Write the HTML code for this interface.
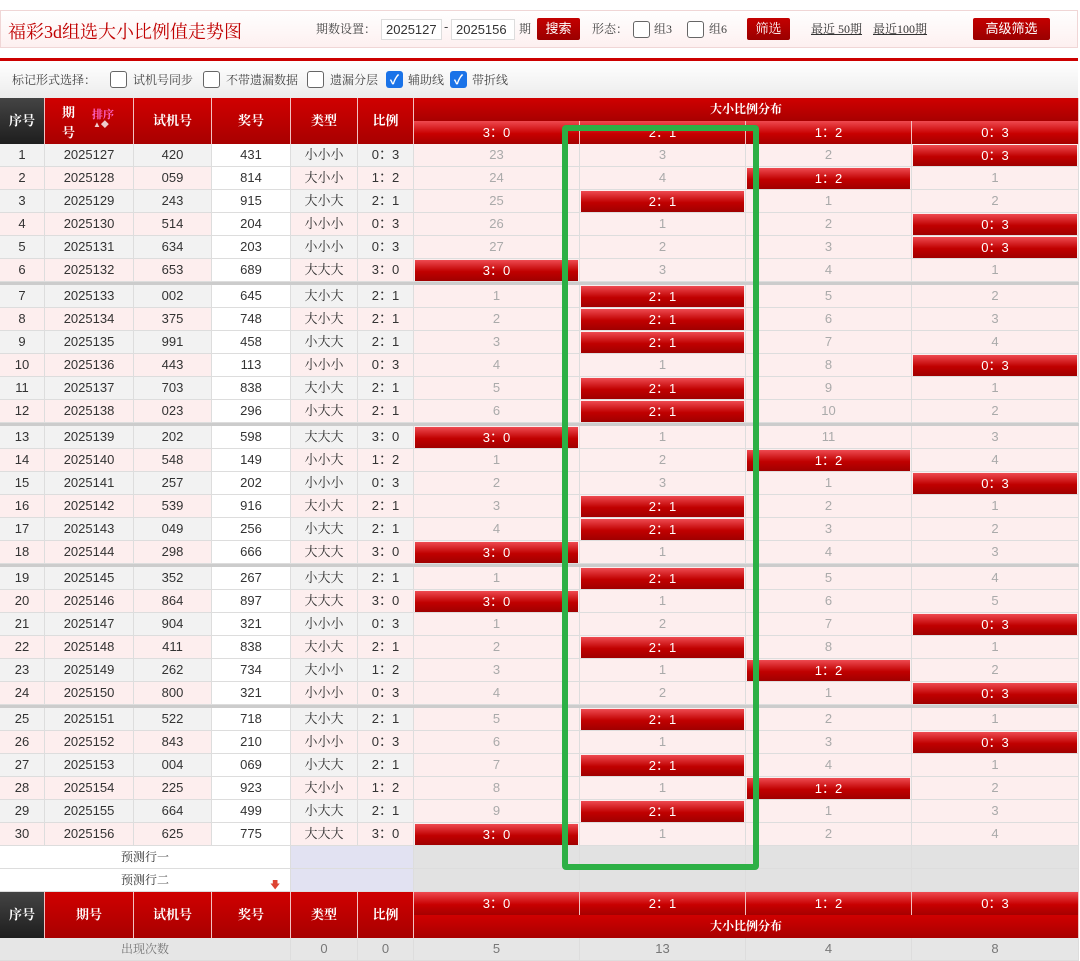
<!DOCTYPE html>
<html><head><meta charset="utf-8"><style>
*{box-sizing:border-box;margin:0;padding:0}
body{width:1080px;height:953px;overflow:hidden;background:#fff;font-family:"Liberation Sans","Noto Sans CJK SC",sans-serif;font-size:13px;color:#333;position:relative}
.ser{font-family:"Liberation Serif","Noto Serif CJK SC",serif}
.top{position:absolute;left:0;top:10px;width:1078px;height:38px;border:1px solid #f0d6d6;background:linear-gradient(#fff,#fdf0f0)}
.abs{position:absolute}
.inp{position:absolute;top:8px;height:21px;border:1px solid #ddd;background:#fff;font-size:13px;line-height:19px;padding-left:4px;color:#333}
.btn{position:absolute;top:7px;height:22px;background:linear-gradient(#c40000,#9a0000);color:#fff;font-size:13px;line-height:22px;text-align:center;border-radius:2px}
.cb{position:absolute;width:17px;height:17px;border:1.5px solid #666;border-radius:3px;background:#fff}
.cbk{position:absolute;width:17px;height:17px;border-radius:3px;background:#1a73e8;color:#fff;font-size:13px;line-height:17px;text-align:center;font-weight:bold}
.rl{position:absolute;left:0;top:58px;width:1078px;height:3px;background:#c00}
.bar{position:absolute;left:0;top:61px;width:1078px;height:37px;background:linear-gradient(#fff,#ececec)}
.grid{position:absolute;left:0;top:98px;width:1079px}
.r{display:flex;height:23px;border-bottom:1px solid #ddd}
.r>div{border-right:1px solid #ddd;text-align:center;line-height:22px;font-size:13px;height:22px;position:relative}
.c1{width:45px}.c2{width:89px}.c3{width:78px}.c4{width:79px}.c5{width:67px}.c6{width:56px}.d{width:166px}.d4{width:167px}
.o>div{background:#f2f2f2}.e>div{background:#fdeeee}
.r>.c4{background:#fff}
.r>.d,.r>.d4{background:#fdeeee;color:#aaa}
.g{border-top:3px solid #ccc;height:26px}
.h{position:absolute;left:1px;right:1px;top:1px;bottom:0;background:linear-gradient(#ee4a50,#c00000 55%,#a00000);color:#fff;line-height:21px}
.hd{position:absolute;top:0;height:46px;background:linear-gradient(#d00000,#a80000);color:#fff;border-right:1px solid #f3c0c0;text-align:center;font-weight:bold;font-size:13px}
.sub{position:absolute;height:23px;background:linear-gradient(#ee4a50,#c80000 55%,#a50000);color:#fff;border-right:1px solid #f3c0c0;text-align:center;line-height:23px;font-size:13px}
</style></head><body>
<div class="top">
 <div class="abs ser" style="left:7px;top:7px;font-size:18px;color:#c00000">福彩3d组选大小比例值走势图</div>
 <div class="abs ser" style="left:315px;top:9px;font-size:12px;color:#444">期数设置：</div>
 <div class="inp" style="left:380px;width:61px">2025127</div>
 <div class="abs" style="left:443px;top:8px;color:#444">-</div>
 <div class="inp" style="left:450px;width:64px">2025156</div>
 <div class="abs ser" style="left:518px;top:9px;font-size:12px;color:#444">期</div>
 <div class="btn" style="left:536px;width:43px">搜索</div>
 <div class="abs ser" style="left:591px;top:9px;font-size:12px;color:#444">形态：</div>
 <div class="cb" style="left:632px;top:10px;border-width:1px"></div>
 <div class="abs ser" style="left:653px;top:9px;font-size:12px;color:#444">组3</div>
 <div class="cb" style="left:686px;top:10px;border-width:1px"></div>
 <div class="abs ser" style="left:708px;top:9px;font-size:12px;color:#444">组6</div>
 <div class="btn ser" style="left:746px;width:43px">筛选</div>
 <div class="abs ser" style="left:810px;top:9px;font-size:12px;color:#333;text-decoration:underline">最近 50期</div>
 <div class="abs ser" style="left:872px;top:9px;font-size:12px;color:#333;text-decoration:underline">最近100期</div>
 <div class="btn" style="left:972px;width:77px">高级筛选</div>
</div>
<div class="rl"></div>
<div class="bar">
 <div class="abs ser" style="left:12px;top:10px;font-size:12px;color:#444">标记形式选择：</div>
 <div class="cb" style="left:110px;top:10px"></div><div class="abs ser" style="left:133px;top:10px;font-size:12px;color:#444">试机号同步</div>
 <div class="cb" style="left:203px;top:10px"></div><div class="abs ser" style="left:226px;top:10px;font-size:12px;color:#444">不带遗漏数据</div>
 <div class="cb" style="left:307px;top:10px"></div><div class="abs ser" style="left:330px;top:10px;font-size:12px;color:#444">遗漏分层</div>
 <div class="cbk" style="left:386px;top:10px">✓</div><div class="abs ser" style="left:408px;top:10px;font-size:12px;color:#444">辅助线</div>
 <div class="cbk" style="left:450px;top:10px">✓</div><div class="abs ser" style="left:472px;top:10px;font-size:12px;color:#444">带折线</div>
</div>

<div class="grid">
 <div style="position:relative;height:46px">
  <div class="hd ser" style="left:0;width:45px;background:linear-gradient(#444,#1e1e1e);line-height:46px">序号</div>
  <div class="hd ser" style="left:45px;width:89px"><span class="abs" style="left:17px;top:4px">期</span><span class="abs" style="left:17px;top:24px">号</span><span class="abs" style="left:47px;top:8px;font-size:11px;color:#f6c">排序</span><span class="abs" style="left:48px;top:21px;font-size:8px;color:#ecc">▲◆</span></div>
  <div class="hd ser" style="left:134px;width:78px;line-height:46px">试机号</div>
  <div class="hd ser" style="left:212px;width:79px;line-height:46px">奖号</div>
  <div class="hd ser" style="left:291px;width:67px;line-height:46px">类型</div>
  <div class="hd ser" style="left:358px;width:56px;line-height:46px">比例</div>
  <div class="hd ser" style="left:414px;width:665px;height:23px;line-height:23px;font-size:12px">大小比例分布</div>
  <div class="sub" style="left:414px;top:23px;width:166px">3：0</div>
  <div class="sub" style="left:580px;top:23px;width:166px">2：1</div>
  <div class="sub" style="left:746px;top:23px;width:166px">1：2</div>
  <div class="sub" style="left:912px;top:23px;width:167px">0：3</div>
 </div>
<div class="r o"><div class="c1">1</div><div class="c2">2025127</div><div class="c3">420</div><div class="c4">431</div><div class="c5 ser">小小小</div><div class="c6">0：3</div><div class="d">23</div><div class="d">3</div><div class="d">2</div><div class="d4"><div class="h">0：3</div></div></div>
<div class="r e"><div class="c1">2</div><div class="c2">2025128</div><div class="c3">059</div><div class="c4">814</div><div class="c5 ser">大小小</div><div class="c6">1：2</div><div class="d">24</div><div class="d">4</div><div class="d"><div class="h">1：2</div></div><div class="d4">1</div></div>
<div class="r o"><div class="c1">3</div><div class="c2">2025129</div><div class="c3">243</div><div class="c4">915</div><div class="c5 ser">大小大</div><div class="c6">2：1</div><div class="d">25</div><div class="d"><div class="h">2：1</div></div><div class="d">1</div><div class="d4">2</div></div>
<div class="r e"><div class="c1">4</div><div class="c2">2025130</div><div class="c3">514</div><div class="c4">204</div><div class="c5 ser">小小小</div><div class="c6">0：3</div><div class="d">26</div><div class="d">1</div><div class="d">2</div><div class="d4"><div class="h">0：3</div></div></div>
<div class="r o"><div class="c1">5</div><div class="c2">2025131</div><div class="c3">634</div><div class="c4">203</div><div class="c5 ser">小小小</div><div class="c6">0：3</div><div class="d">27</div><div class="d">2</div><div class="d">3</div><div class="d4"><div class="h">0：3</div></div></div>
<div class="r e"><div class="c1">6</div><div class="c2">2025132</div><div class="c3">653</div><div class="c4">689</div><div class="c5 ser">大大大</div><div class="c6">3：0</div><div class="d"><div class="h">3：0</div></div><div class="d">3</div><div class="d">4</div><div class="d4">1</div></div>
<div class="r o g"><div class="c1">7</div><div class="c2">2025133</div><div class="c3">002</div><div class="c4">645</div><div class="c5 ser">大小大</div><div class="c6">2：1</div><div class="d">1</div><div class="d"><div class="h">2：1</div></div><div class="d">5</div><div class="d4">2</div></div>
<div class="r e"><div class="c1">8</div><div class="c2">2025134</div><div class="c3">375</div><div class="c4">748</div><div class="c5 ser">大小大</div><div class="c6">2：1</div><div class="d">2</div><div class="d"><div class="h">2：1</div></div><div class="d">6</div><div class="d4">3</div></div>
<div class="r o"><div class="c1">9</div><div class="c2">2025135</div><div class="c3">991</div><div class="c4">458</div><div class="c5 ser">小大大</div><div class="c6">2：1</div><div class="d">3</div><div class="d"><div class="h">2：1</div></div><div class="d">7</div><div class="d4">4</div></div>
<div class="r e"><div class="c1">10</div><div class="c2">2025136</div><div class="c3">443</div><div class="c4">113</div><div class="c5 ser">小小小</div><div class="c6">0：3</div><div class="d">4</div><div class="d">1</div><div class="d">8</div><div class="d4"><div class="h">0：3</div></div></div>
<div class="r o"><div class="c1">11</div><div class="c2">2025137</div><div class="c3">703</div><div class="c4">838</div><div class="c5 ser">大小大</div><div class="c6">2：1</div><div class="d">5</div><div class="d"><div class="h">2：1</div></div><div class="d">9</div><div class="d4">1</div></div>
<div class="r e"><div class="c1">12</div><div class="c2">2025138</div><div class="c3">023</div><div class="c4">296</div><div class="c5 ser">小大大</div><div class="c6">2：1</div><div class="d">6</div><div class="d"><div class="h">2：1</div></div><div class="d">10</div><div class="d4">2</div></div>
<div class="r o g"><div class="c1">13</div><div class="c2">2025139</div><div class="c3">202</div><div class="c4">598</div><div class="c5 ser">大大大</div><div class="c6">3：0</div><div class="d"><div class="h">3：0</div></div><div class="d">1</div><div class="d">11</div><div class="d4">3</div></div>
<div class="r e"><div class="c1">14</div><div class="c2">2025140</div><div class="c3">548</div><div class="c4">149</div><div class="c5 ser">小小大</div><div class="c6">1：2</div><div class="d">1</div><div class="d">2</div><div class="d"><div class="h">1：2</div></div><div class="d4">4</div></div>
<div class="r o"><div class="c1">15</div><div class="c2">2025141</div><div class="c3">257</div><div class="c4">202</div><div class="c5 ser">小小小</div><div class="c6">0：3</div><div class="d">2</div><div class="d">3</div><div class="d">1</div><div class="d4"><div class="h">0：3</div></div></div>
<div class="r e"><div class="c1">16</div><div class="c2">2025142</div><div class="c3">539</div><div class="c4">916</div><div class="c5 ser">大小大</div><div class="c6">2：1</div><div class="d">3</div><div class="d"><div class="h">2：1</div></div><div class="d">2</div><div class="d4">1</div></div>
<div class="r o"><div class="c1">17</div><div class="c2">2025143</div><div class="c3">049</div><div class="c4">256</div><div class="c5 ser">小大大</div><div class="c6">2：1</div><div class="d">4</div><div class="d"><div class="h">2：1</div></div><div class="d">3</div><div class="d4">2</div></div>
<div class="r e"><div class="c1">18</div><div class="c2">2025144</div><div class="c3">298</div><div class="c4">666</div><div class="c5 ser">大大大</div><div class="c6">3：0</div><div class="d"><div class="h">3：0</div></div><div class="d">1</div><div class="d">4</div><div class="d4">3</div></div>
<div class="r o g"><div class="c1">19</div><div class="c2">2025145</div><div class="c3">352</div><div class="c4">267</div><div class="c5 ser">小大大</div><div class="c6">2：1</div><div class="d">1</div><div class="d"><div class="h">2：1</div></div><div class="d">5</div><div class="d4">4</div></div>
<div class="r e"><div class="c1">20</div><div class="c2">2025146</div><div class="c3">864</div><div class="c4">897</div><div class="c5 ser">大大大</div><div class="c6">3：0</div><div class="d"><div class="h">3：0</div></div><div class="d">1</div><div class="d">6</div><div class="d4">5</div></div>
<div class="r o"><div class="c1">21</div><div class="c2">2025147</div><div class="c3">904</div><div class="c4">321</div><div class="c5 ser">小小小</div><div class="c6">0：3</div><div class="d">1</div><div class="d">2</div><div class="d">7</div><div class="d4"><div class="h">0：3</div></div></div>
<div class="r e"><div class="c1">22</div><div class="c2">2025148</div><div class="c3">411</div><div class="c4">838</div><div class="c5 ser">大小大</div><div class="c6">2：1</div><div class="d">2</div><div class="d"><div class="h">2：1</div></div><div class="d">8</div><div class="d4">1</div></div>
<div class="r o"><div class="c1">23</div><div class="c2">2025149</div><div class="c3">262</div><div class="c4">734</div><div class="c5 ser">大小小</div><div class="c6">1：2</div><div class="d">3</div><div class="d">1</div><div class="d"><div class="h">1：2</div></div><div class="d4">2</div></div>
<div class="r e"><div class="c1">24</div><div class="c2">2025150</div><div class="c3">800</div><div class="c4">321</div><div class="c5 ser">小小小</div><div class="c6">0：3</div><div class="d">4</div><div class="d">2</div><div class="d">1</div><div class="d4"><div class="h">0：3</div></div></div>
<div class="r o g"><div class="c1">25</div><div class="c2">2025151</div><div class="c3">522</div><div class="c4">718</div><div class="c5 ser">大小大</div><div class="c6">2：1</div><div class="d">5</div><div class="d"><div class="h">2：1</div></div><div class="d">2</div><div class="d4">1</div></div>
<div class="r e"><div class="c1">26</div><div class="c2">2025152</div><div class="c3">843</div><div class="c4">210</div><div class="c5 ser">小小小</div><div class="c6">0：3</div><div class="d">6</div><div class="d">1</div><div class="d">3</div><div class="d4"><div class="h">0：3</div></div></div>
<div class="r o"><div class="c1">27</div><div class="c2">2025153</div><div class="c3">004</div><div class="c4">069</div><div class="c5 ser">小大大</div><div class="c6">2：1</div><div class="d">7</div><div class="d"><div class="h">2：1</div></div><div class="d">4</div><div class="d4">1</div></div>
<div class="r e"><div class="c1">28</div><div class="c2">2025154</div><div class="c3">225</div><div class="c4">923</div><div class="c5 ser">大小小</div><div class="c6">1：2</div><div class="d">8</div><div class="d">1</div><div class="d"><div class="h">1：2</div></div><div class="d4">2</div></div>
<div class="r o"><div class="c1">29</div><div class="c2">2025155</div><div class="c3">664</div><div class="c4">499</div><div class="c5 ser">小大大</div><div class="c6">2：1</div><div class="d">9</div><div class="d"><div class="h">2：1</div></div><div class="d">1</div><div class="d4">3</div></div>
<div class="r e"><div class="c1">30</div><div class="c2">2025156</div><div class="c3">625</div><div class="c4">775</div><div class="c5 ser">大大大</div><div class="c6">3：0</div><div class="d"><div class="h">3：0</div></div><div class="d">1</div><div class="d">2</div><div class="d4">4</div></div>
<div class="r"><div class="ser" style="width:291px;background:#fff;font-size:12px">预测行一</div><div style="width:123px;background:#e2e2f2"></div><div class="d" style="background:#e2e2e2"></div><div class="d" style="background:#e2e2e2"></div><div class="d" style="background:#e2e2e2"></div><div class="d4" style="background:#e2e2e2"></div></div>
<div class="r"><div class="ser" style="width:291px;background:#fff;font-size:12px">预测行二<span class="abs" style="left:270px;top:6px;color:#d43;font-size:10px">🡇</span></div><div style="width:123px;background:#e2e2f2"></div><div class="d" style="background:#e2e2e2"></div><div class="d" style="background:#e2e2e2"></div><div class="d" style="background:#e2e2e2"></div><div class="d4" style="background:#e2e2e2"></div></div>
 <div style="position:relative;height:46px">
  <div class="hd ser" style="left:0;width:45px;background:linear-gradient(#444,#1e1e1e);line-height:46px">序号</div>
  <div class="hd ser" style="left:45px;width:89px;line-height:46px">期号</div>
  <div class="hd ser" style="left:134px;width:78px;line-height:46px">试机号</div>
  <div class="hd ser" style="left:212px;width:79px;line-height:46px">奖号</div>
  <div class="hd ser" style="left:291px;width:67px;line-height:46px">类型</div>
  <div class="hd ser" style="left:358px;width:56px;line-height:46px">比例</div>
  <div class="sub" style="left:414px;top:0;width:166px">3：0</div>
  <div class="sub" style="left:580px;top:0;width:166px">2：1</div>
  <div class="sub" style="left:746px;top:0;width:166px">1：2</div>
  <div class="sub" style="left:912px;top:0;width:167px">0：3</div>
  <div class="hd ser" style="left:414px;top:23px;width:665px;height:23px;line-height:23px;font-size:12px">大小比例分布</div>
 </div>
 <div class="r" style="color:#777"><div class="ser" style="width:291px;background:#e6e6e6;font-size:12px">出现次数</div><div class="c5" style="background:#e6e6e6">0</div><div class="c6" style="background:#e6e6e6">0</div><div class="d" style="background:#e6e6e6;color:#777">5</div><div class="d" style="background:#e6e6e6;color:#777">13</div><div class="d" style="background:#e6e6e6;color:#777">4</div><div class="d4" style="background:#e6e6e6;color:#777">8</div></div>
</div>
<div class="abs" style="left:562px;top:125px;width:197px;height:745px;border:6px solid #2db045;border-radius:4px"></div>
</body></html>
